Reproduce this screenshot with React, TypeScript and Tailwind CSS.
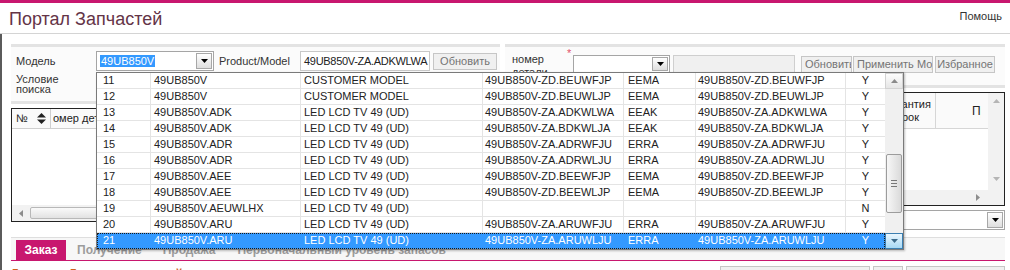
import React from 'react';

const rows: string[][] = [
  ['11', '49UB850V', 'CUSTOMER MODEL', '49UB850V-ZD.BEUWFJP', 'EEMA', '49UB850V-ZD.BEUWFJP', 'Y'],
  ['12', '49UB850V', 'CUSTOMER MODEL', '49UB850V-ZD.BEUWLJP', 'EEMA', '49UB850V-ZD.BEUWLJP', 'Y'],
  ['13', '49UB850V.ADK', 'LED LCD TV 49 (UD)', '49UB850V-ZA.ADKWLWA', 'EEAK', '49UB850V-ZA.ADKWLWA', 'Y'],
  ['14', '49UB850V.ADK', 'LED LCD TV 49 (UD)', '49UB850V-ZA.BDKWLJA', 'EEAK', '49UB850V-ZA.BDKWLJA', 'Y'],
  ['15', '49UB850V.ADR', 'LED LCD TV 49 (UD)', '49UB850V-ZA.ADRWFJU', 'ERRA', '49UB850V-ZA.ADRWFJU', 'Y'],
  ['16', '49UB850V.ADR', 'LED LCD TV 49 (UD)', '49UB850V-ZA.ADRWLJU', 'ERRA', '49UB850V-ZA.ADRWLJU', 'Y'],
  ['17', '49UB850V.AEE', 'LED LCD TV 49 (UD)', '49UB850V-ZD.BEEWFJP', 'EEMA', '49UB850V-ZD.BEEWFJP', 'Y'],
  ['18', '49UB850V.AEE', 'LED LCD TV 49 (UD)', '49UB850V-ZD.BEEWLJP', 'EEMA', '49UB850V-ZD.BEEWLJP', 'Y'],
  ['19', '49UB850V.AEUWLHX', 'LED LCD TV 49 (UD)', '', '', '', 'N'],
  ['20', '49UB850V.ARU', 'LED LCD TV 49 (UD)', '49UB850V-ZA.ARUWFJU', 'ERRA', '49UB850V-ZA.ARUWFJU', 'Y'],
  ['21', '49UB850V.ARU', 'LED LCD TV 49 (UD)', '49UB850V-ZA.ARUWLJU', 'ERRA', '49UB850V-ZA.ARUWLJU', 'Y'],
];

const cols = [
  'w-[54px] pl-[6px]',
  'w-[150px] pl-[3px]',
  'w-[182px] pl-[3px]',
  'w-[141px] pl-[2px]',
  'w-[72px] pl-[4px]',
  'w-[150px] pl-[2px]',
  'w-[39px] text-center',
];

function Tri({ dir = 'down', color = '#000' }: { dir?: 'up' | 'down' | 'left' | 'right'; color?: string }) {
  const vertical = dir === 'up' || dir === 'down';
  const pts = {
    down: '0,0 7,0 3.5,4',
    up: '0,4 7,4 3.5,0',
    left: '4,0 4,7 0,3.5',
    right: '0,0 0,7 4,3.5',
  }[dir];
  return (
    <svg width={vertical ? 7 : 4} height={vertical ? 4 : 7} viewBox={vertical ? '0 0 7 4' : '0 0 4 7'}>
      <polygon points={pts} fill={color} />
    </svg>
  );
}

function DropBtn() {
  return (
    <div className="flex h-[16px] w-[16px] shrink-0 items-center justify-center border border-[#a7a7a7] bg-linear-to-b from-white to-[#dedede]">
      <Tri />
    </div>
  );
}

function GrayBtn({ label, className }: { label: string; className: string }) {
  return (
    <div className={`flex h-[17px] items-center justify-center overflow-hidden whitespace-nowrap border border-[#c6c6c6] bg-[#f0f0f0] px-[3px] text-[#747474] ${className}`}>
      {label}
    </div>
  );
}

function ModelDropdown() {
  return (
    <div className="absolute left-[96px] top-[72px] flex h-[178px] w-[808px] border border-[#7a7a7a] bg-white text-[#222] shadow-[1px_1px_2px_rgba(0,0,0,0.25)]">
      <div className="flex-1">
        {rows.map((r) => {
          const sel = r[0] === '21';
          return (
            <div
              key={r[0]}
              className={`flex h-[16px] items-center leading-[15px] ${
                sel
                  ? 'bg-[#3399ff] text-white outline-1 outline-dotted outline-[#1a1a1a] -outline-offset-1'
                  : 'border-b border-[#e4e4e4]'
              }`}
            >
              {r.map((c, i) => (
                <div
                  key={i}
                  className={`${cols[i]} h-full shrink-0 overflow-hidden whitespace-nowrap ${
                    sel ? '' : 'border-r border-[#e4e4e4]'
                  } ${i === 6 ? 'border-r-0' : ''}`}
                >
                  {c}
                </div>
              ))}
            </div>
          );
        })}
      </div>
      {/* scrollbar */}
      <div className="flex w-[18px] flex-col bg-[#f0f0f0]">
        <div className="flex h-[16px] items-center justify-center border border-[#d2d2d2] bg-linear-to-b from-[#fdfdfd] to-[#e6e6e6]">
          <Tri dir="up" color="#8a8a8a" />
        </div>
        <div className="flex-1 pt-[65px]">
          <div className="mx-[1px] flex h-[59px] flex-col items-center justify-center gap-[2px] rounded-[2px] border border-[#9c9c9c] bg-linear-to-r from-[#f7f7f7] to-[#dadada]">
            <div className="h-px w-[6px] bg-[#777]" />
            <div className="h-px w-[6px] bg-[#777]" />
            <div className="h-px w-[6px] bg-[#777]" />
          </div>
        </div>
        <div className="flex h-[16px] items-center justify-center border border-[#3c7fb1] bg-linear-to-b from-[#eaf6fd] to-[#a7d9f5]">
          <Tri dir="down" color="#3c6a8a" />
        </div>
      </div>
    </div>
  );
}

export default function App() {
  return (
    <div className="relative h-[270px] w-[1010px] overflow-hidden bg-white font-['Liberation_Sans',Arial,sans-serif] text-[11px] text-[#222]">
      <div className="h-[3px] bg-[#c8176f]" />
      <header className="flex h-[31px] items-start justify-between border-b border-[#d4d4d4] pl-[9px] pr-[8px]">
        <h1 className="mt-[5px] text-[18px] leading-[22px] text-[#643447]">Портал Запчастей</h1>
        <span className="mt-[5px] text-[11px] text-[#333]">Помощь</span>
      </header>

      <div className="h-[236px] border-l-2 border-[#5b5b5b] pl-[9px] pr-[5px]">
        <div className="flex gap-[5px] pt-[10px]">
          {/* left column */}
          <div className="w-[489px]">
            <div className="h-[60px] border-y-[3px] border-[#e3e3e3] bg-[#fbfbfb] pl-[5px] pt-[4px]">
              <div className="flex h-[20px] items-center">
                <span className="w-[80px] text-[#333]">Модель</span>
                <div className="flex h-[20px] w-[118px] items-center border border-[#a5a5a5] bg-white pr-[1px]">
                  <div className="flex-1 pl-[3px]">
                    <span className="bg-[#3399ff] px-px text-white">49UB850V</span>
                  </div>
                  <DropBtn />
                </div>
                <span className="ml-[5px] w-[81px] text-[#333]">Product/Model</span>
                <div className="flex h-[20px] w-[130px] items-center overflow-hidden whitespace-nowrap border border-[#c8c8c8] bg-white pl-[3px] tracking-[-0.3px]">
                  49UB850V-ZA.ADKWLWA
                </div>
                <GrayBtn label="Обновить" className="ml-[3px] h-[16px] w-[64px]" />
              </div>
              <div className="mt-[3px] text-[11px] leading-[10px] text-[#333]">
                Условие
                <br />
                поиска
              </div>
            </div>

            <div className="mt-[4px] flex h-[114px] flex-col border border-[#222] bg-white">
              <div className="flex h-[20px] items-center border-b border-[#cfcfcf] bg-[#fafafa]">
                <div className="flex h-full w-[39px] items-center gap-[9px] border-r border-[#cfcfcf] pl-[4px]">
                  <span>№</span>
                  <svg width="9" height="11" viewBox="0 0 9 11">
                    <polygon points="0,4.5 9,4.5 4.5,0" fill="#222" />
                    <polygon points="0,6.5 9,6.5 4.5,11" fill="#222" />
                  </svg>
                </div>
                <span className="pl-[2px]">омер детали</span>
              </div>
              <div className="flex-1" />
              <div className="flex h-[16px] items-center bg-[#f2f2f2] pl-[7px]">
                <Tri dir="left" color="#8d8d8d" />
                <div className="ml-[7px] h-[12px] w-[160px] rounded-[2px] border border-[#b8b8b8] bg-linear-to-b from-[#fafafa] to-[#e2e2e2]" />
              </div>
            </div>
          </div>

          {/* right column */}
          <div className="flex-1">
            <div className="h-[44px] border-y-[3px] border-[#e3e3e3] bg-[#fbfbfb] pl-[7px] pt-[6px]">
              <div className="flex items-start">
                <span className="w-[55px] leading-[13px] text-[#333]">
                  номер
                  <br />
                  детали
                </span>
                <span className="-mt-[8px] w-[6px] text-[#e2506a]">*</span>
                <div className="mt-[2px] flex h-[18px] w-[97px] items-center justify-end border border-[#a5a5a5] bg-white pr-[1px]">
                  <div className="flex h-[14px] w-[16px] items-center justify-center border border-[#a7a7a7] bg-linear-to-b from-white to-[#dedede]">
                    <Tri />
                  </div>
                </div>
                <div className="ml-[3px] mt-[2px] h-[18px] w-[122px] border border-[#cfcfcf] bg-[#f0f0f0]" />
                <GrayBtn label="Обновить" className="ml-[6px] mt-[3px] w-[51px] justify-start" />
                <GrayBtn label="Применить Модель" className="ml-[1px] mt-[3px] w-[80px] justify-start" />
                <GrayBtn label="Избранное" className="ml-[2px] mt-[3px] w-[60px]" />
              </div>
            </div>

            <div className="mt-[4px] flex h-[114px] border border-[#222] bg-white">
              <div className="flex flex-1 flex-col">
                <div className="flex h-[36px] justify-end border-b border-[#d6d6d6] bg-[#fafafa]">
                  <div className="flex h-full w-[60px] flex-col justify-center overflow-hidden whitespace-nowrap border-r border-[#d6d6d6] pl-[8px] leading-[13px]">
                    <span>Гарантия</span>
                    <span className="pl-[10px]">Срок</span>
                  </div>
                  <div className="flex h-full w-[45px] items-center overflow-hidden whitespace-nowrap pl-[36px] text-[12px]">
                    Продажа
                  </div>
                  <div className="w-[7px]" />
                </div>
                <div className="flex-1" />
                <div className="flex h-[15px] items-center justify-end bg-[#f2f2f2] pr-[8px]">
                  <Tri dir="right" color="#8d8d8d" />
                </div>
              </div>
              <div className="flex w-[16px] flex-col items-center justify-between bg-[#f2f2f2] pb-[24px] pt-[6px]">
                <Tri dir="up" color="#b5b5b5" />
                <Tri dir="down" color="#b5b5b5" />
              </div>
            </div>

            <div className="mt-[4px] flex h-[20px] items-center justify-end border border-[#a5a5a5] bg-white pr-[1px]">
              <DropBtn />
            </div>
          </div>
        </div>

        <div className="mt-[7px] border-t border-[#dedede]" />
        <div className="flex h-[23px] items-end border-b border-[#c8176f] bg-[#f7f7f7] text-[12px] font-bold text-[#9c9c9c]">
          <div className="ml-[5px] flex h-[20px] w-[50px] items-center justify-center bg-[#c8176f] text-white">Заказ</div>
          <div className="ml-[11px] flex h-[20px] items-center">Получение</div>
          <div className="ml-[21px] flex h-[20px] items-center">Продажа</div>
          <div className="ml-[22px] flex h-[20px] items-center">Первоначальный уровень запасов</div>
        </div>
        <div className="flex items-start pt-[5px]">
          <span className="-ml-px text-[13px] font-bold leading-[15px] text-[#d0601f]">Дата</span>
          <span className="ml-[28px] text-[13px] font-bold leading-[15px] text-[#d0601f]">Детали запчастей</span>
          <div className="ml-auto flex gap-[3px]">
            <div className="h-[12px] w-[150px] border border-[#c6c6c6] bg-[#f0f0f0]" />
            <div className="h-[12px] w-[30px] border border-[#c6c6c6] bg-[#f0f0f0]" />
            <div className="h-[12px] w-[99px] border border-[#c6c6c6] bg-[#f0f0f0]" />
          </div>
        </div>
      </div>

      <ModelDropdown />
    </div>
  );
}
